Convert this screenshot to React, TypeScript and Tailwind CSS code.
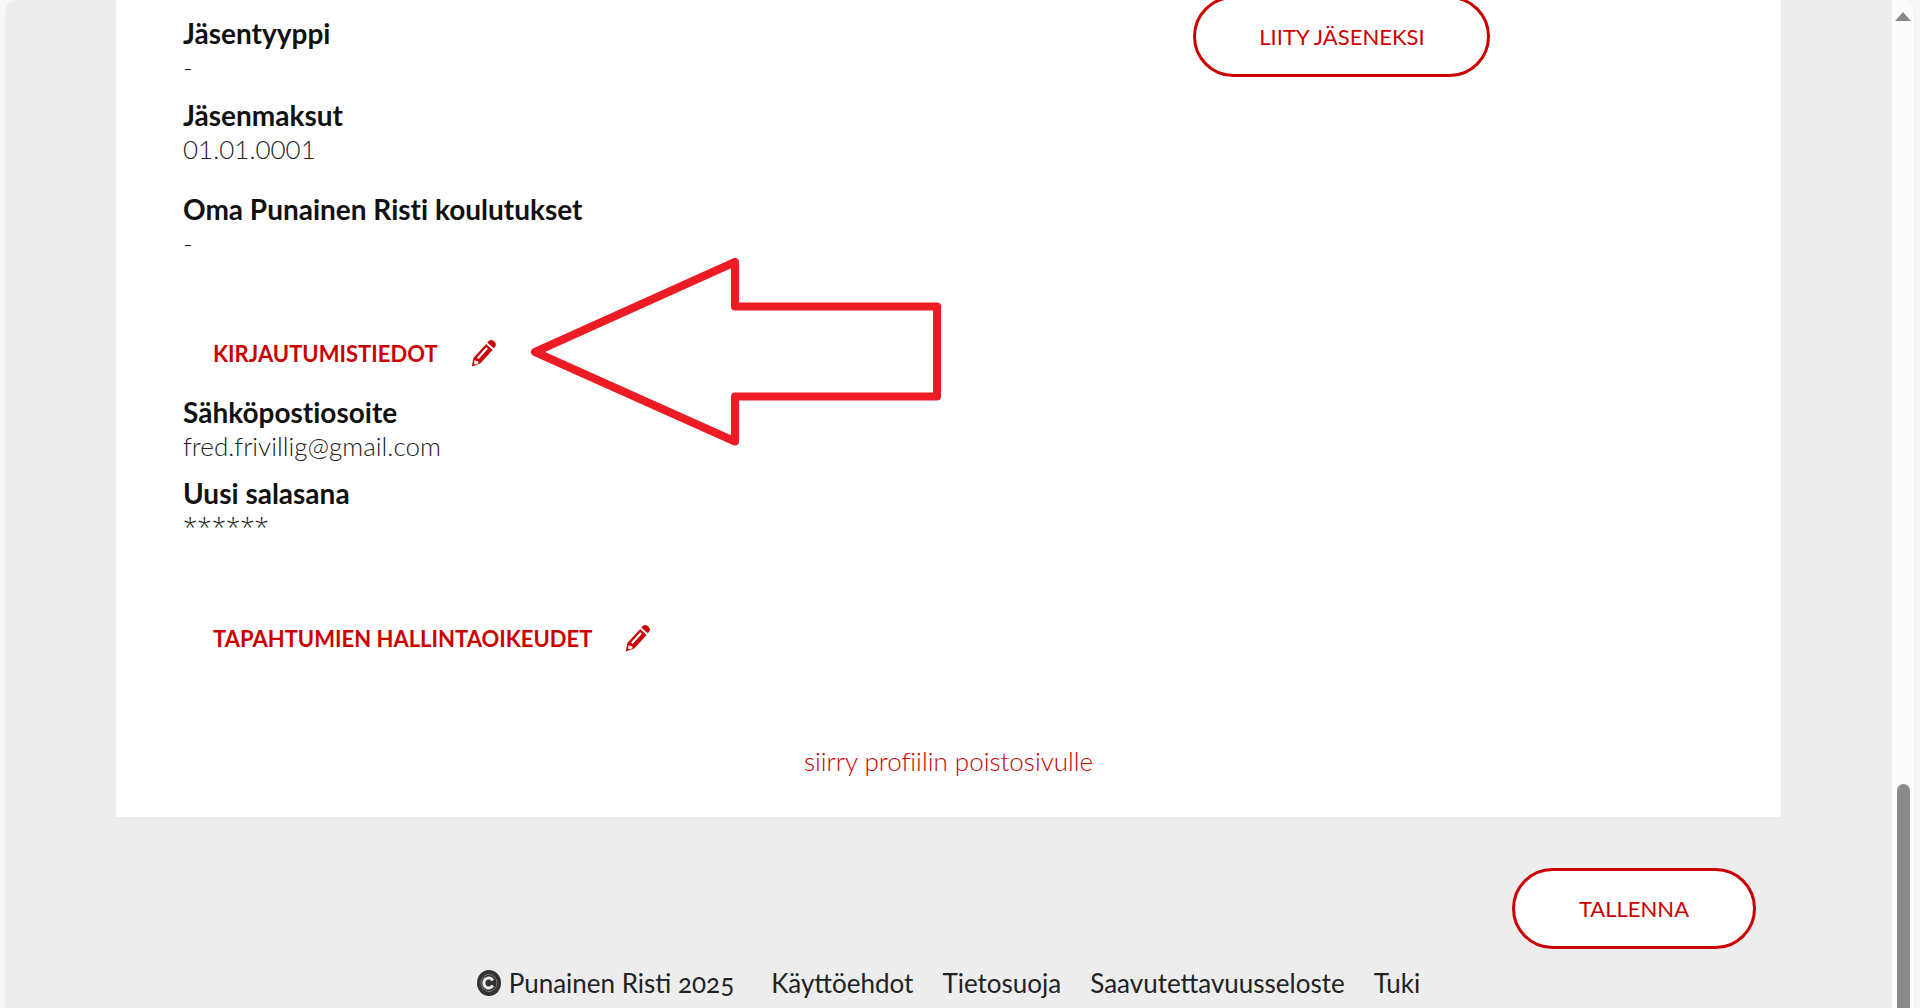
const footerLinks = ["Käyttöehdot", "Tietosuoja", "Saavutettavuusseloste", "Tuki"];

function PencilIcon() {
  return (
    <svg viewBox="0 0 26 28" className="h-7 w-[26px]" aria-hidden="true">
      <path
        fill="#cc0000"
        d="M17.600 2.200c1.400-1.700 3.400-1.700 5-.3l1.100 1c1.500 1.500 1.600 3.400.2 5l-1.200 1.400-6.400-5.700z"
      />
      <path
        fill="#cc0000"
        fillRule="evenodd"
        d="M15.200 5.100l6.400 5.800L9.200 24.400.8 27.600l1.600-8.700zM15.200 8.300L6 18.500l1.700 1.500 9.200-10.200zM3.700 20.800l-.7 3.400 1.400 1.200 3.200-1.200-.5-2-2.100-.2z"
      />
    </svg>
  );
}

function CopyrightIcon() {
  return (
    <svg viewBox="0 0 24 26" className="h-[26px] w-6" aria-hidden="true">
      <ellipse cx="12" cy="13" rx="12" ry="13" fill="#333" />
      <ellipse cx="12" cy="13" rx="8" ry="8.500" fill="none" stroke="#777" strokeWidth="1" />
      <path d="M15.800 10.500a4.800 5 0 1 0 0 5" fill="none" stroke="#ededed" strokeWidth="3" />
    </svg>
  );
}

function Field({ label, value }: { label: string; value: string }) {
  return (
    <div className="leading-[34px]">
      <dt className="text-[28px] font-bold text-[#111]">{label}</dt>
      <dd className="text-[26px] font-light text-[#222]">{value}</dd>
    </div>
  );
}

function SectionHeading({ title }: { title: string }) {
  return (
    <div className="flex h-[34px] items-center gap-[33px] pl-[30px]">
      <h2 className="pt-0.5 text-[22px] font-bold leading-[34px] text-[#cc0000]">{title}</h2>
      <button type="button" aria-label={"Muokkaa: " + title}>
        <PencilIcon />
      </button>
    </div>
  );
}

export default function App() {
  return (
    <div className="flex min-h-screen bg-[#f7f7f7] px-[5px] font-['Lato',sans-serif]">
      <div className="flex min-w-0 flex-1 flex-col rounded-tl-xl bg-[#ededed] px-[111px]">
        <main>
          <div className="bg-white px-[67px] pt-4 pb-[39px] [font-variant-ligatures:none]">
            <div className="flex items-start">
              <dl className="w-[66%]">
                <Field label="Jäsentyyppi" value="-" />
                <div className="mt-[14px]">
                  <Field label="Jäsenmaksut" value="01.01.0001" />
                </div>
                <div className="mt-[26px]">
                  <Field label="Oma Punainen Risti koulutukset" value="-" />
                </div>
              </dl>
              <button
                type="button"
                className="-mt-5 h-[81px] w-[297px] rounded-full border-[3px] border-[#cc0000] bg-white text-[22px] text-[#cc0000]"
              >
                LIITY JÄSENEKSI
              </button>
            </div>

            <section className="relative mt-[76px]">
              <SectionHeading title="KIRJAUTUMISTIEDOT" />
              <svg
                viewBox="0 0 416 196"
                className="absolute -top-[82px] left-[345px] h-[196px] w-[416px]"
                aria-hidden="true"
              >
                <path
                  d="M7 98L207 8v44.500h202v90H207v45z"
                  fill="none"
                  stroke="#ed1c24"
                  strokeWidth="8"
                  strokeLinejoin="round"
                />
              </svg>
              <dl className="mt-[25px]">
                <Field label="Sähköpostiosoite" value="fred.frivillig@gmail.com" />
                <div className="mt-[13px] leading-[34px]">
                  <dt className="text-[28px] font-bold text-[#111]">Uusi salasana</dt>
                  <dd className="font-['Open_Sans',sans-serif] text-[26px] font-light leading-8 text-[#222]">
                    ******
                  </dd>
                </div>
              </dl>
            </section>

            <section className="mt-[79px]">
              <SectionHeading title="TAPAHTUMIEN HALLINTAOIKEUDET" />
            </section>

            <p className="mt-[89px] text-center text-[26px] font-light leading-[34px]">
              <a href="#poisto" className="text-[#cc0000]">
                siirry profiilin poistosivulle
              </a>
            </p>
          </div>

          <div className="mt-[51px] flex justify-end pr-[25px]">
            <button
              type="button"
              className="h-[81px] w-[244px] rounded-full border-[3px] border-[#cc0000] bg-white text-[22px] text-[#cc0000]"
            >
              TALLENNA
            </button>
          </div>
        </main>

        <footer className="mt-[17px] flex justify-center gap-[29px] text-[26px] leading-[34px] text-[#222]">
          <span className="mr-2 flex items-center gap-2 [font-variant-numeric:oldstyle-nums]">
            <CopyrightIcon />
            Punainen Risti 2025
          </span>
          {footerLinks.map((link) => (
            <a key={link} href="#">
              {link}
            </a>
          ))}
        </footer>
      </div>

      {/* scrollbar */}
      <div className="flex w-[23px] flex-col items-center rounded-tr-xl border-r border-[#eee] bg-[#fcfcfc] pt-3">
        <svg viewBox="0 0 16 9" className="h-[9px] w-4" aria-hidden="true">
          <path d="M8 0l8 9H0z" fill="#8a8a8a" />
        </svg>
        <div className="mt-auto h-56 w-[13px] rounded-t-full bg-[#8a8a8a]" />
      </div>
    </div>
  );
}
